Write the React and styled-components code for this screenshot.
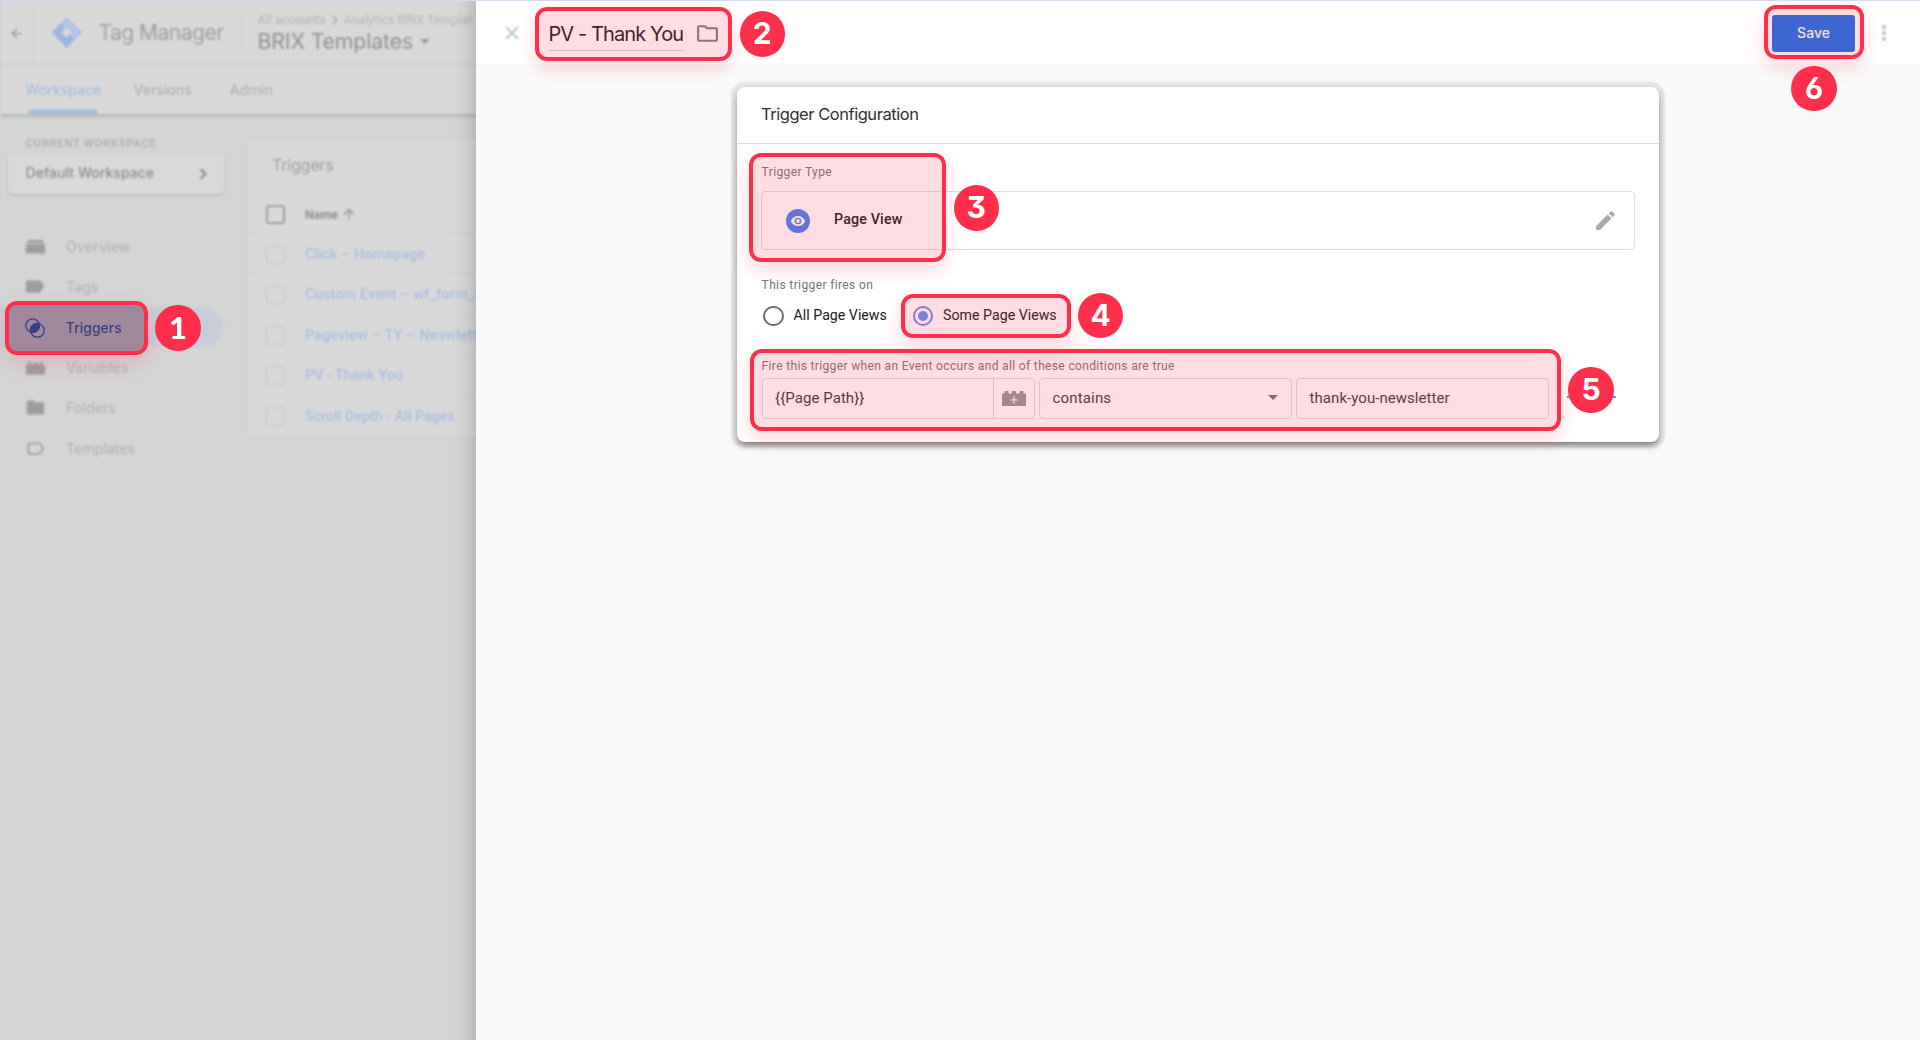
import React from "react";
import styled, { createGlobalStyle, css } from "styled-components";

const RED = "#ff2e4b";
const SANS = `Inter, "Open Sans", sans-serif`;
const ROBOTO = `Roboto, "Liberation Sans", sans-serif`;

const Global = createGlobalStyle`
  *, *::before, *::after { box-sizing: border-box; }
  body { margin: 0; background: #f8faf9; overflow: hidden; }
`;

const Page = styled.div`
  position: relative;
  display: flex;
  width: 1920px;
  height: 1040px;
  overflow: hidden;
  font-family: ${ROBOTO};
  color: #3c4043;
  &::before {
    content: "";
    position: absolute;
    z-index: 3;
    inset: 0 0 auto 0;
    height: 1px;
    background: #d5daf2;
  }
`;

const Text = styled.span`
  font-family: ${(p) => (p.$sans ? SANS : ROBOTO)};
  font-size: ${(p) => p.$size}px;
  font-weight: ${(p) => p.$weight || 400};
  letter-spacing: ${(p) => p.$track || 0}px;
  color: ${(p) => p.$color || "inherit"};
  line-height: 1.2;
  white-space: nowrap;
`;

/* ---------- left (dimmed) pane ---------- */

const Backdrop = styled.aside`
  position: relative;
  flex: none;
  width: 476px;
  height: 1040px;
  overflow: hidden;
  background: #d3d5d4;
  border-left: 1px solid #cdd1dc;
  &::after {
    content: "";
    position: absolute;
    inset: 0 0 0 auto;
    width: 22px;
    background: linear-gradient(90deg, rgba(0, 0, 0, 0), rgba(0, 0, 0, 0.04) 50%, rgba(0, 0, 0, 0.13));
  }
`;

const Soft = styled.div`
  filter: blur(1.25px);
  width: 520px;
  margin-left: -1px;
`;

const TopBar = styled.header`
  display: flex;
  align-items: center;
  height: 65px;
  background: #d8d8d8;
  border-bottom: 1px solid #d0d1d1;
`;

const BackCell = styled.div`
  display: flex;
  align-items: center;
  justify-content: center;
  width: 34px;
  height: 64px;
  padding-top: 3px;
  border-right: 1px solid #cfd0d0;
`;

const Brand = styled.div`
  display: flex;
  align-items: center;
  gap: 17px;
  width: 208px;
  height: 32px;
  padding: 2px 0 0 16.5px;
  border-right: 1px solid #cfd0d0;
`;

const Account = styled.div`
  display: flex;
  flex-direction: column;
  padding: 1.5px 0 0 15.5px;
`;

const Line = styled.div`
  display: flex;
  align-items: center;
  gap: ${(p) => p.$gap}px;
`;

const Tabs = styled.nav`
  display: flex;
  gap: 33px;
  height: 50px;
  padding-left: 25.5px;
  background: #d8d8d8;
  border-bottom: 1px solid #b9bbbb;
  box-shadow: 0 1px 3px rgba(0, 0, 0, 0.22);
`;

const Tab = styled.div`
  position: relative;
  width: ${(p) => p.$width}px;
  padding-top: 15px;
  color: ${(p) => (p.$active ? "#a5bbe3" : "#adafb0")};
  ${(p) => p.$active && css`
    &::after {
      content: "";
      position: absolute;
      left: 2px;
      right: 3px;
      bottom: 0;
      height: 5px;
      border-radius: 4px 4px 0 0;
      background: #a9bce2;
    }
  `}
`;

const Workarea = styled.div`
  display: flex;
  align-items: flex-start;
`;

const SideNav = styled.div`
  display: flex;
  flex-direction: column;
  width: 247px;
  padding-top: 20.5px;
`;

const Caption = styled.div`
  height: 18px;
  padding-left: 25.5px;
  line-height: 12px;
`;

const WorkspacePicker = styled.div`
  display: flex;
  align-items: center;
  justify-content: space-between;
  width: 216px;
  height: 40.5px;
  margin: 0 0 32px 8px;
  padding: 0 10px 0 17.5px;
  border-radius: 4px;
  background: #d9d9d9;
  box-shadow: 0 1px 3px rgba(0, 0, 0, 0.16);
`;

const NavItem = styled.div`
  display: flex;
  align-items: center;
  gap: 20px;
  width: 223px;
  height: 40.4px;
  padding-left: 25px;
  border-radius: 0 20px 20px 0;
  background: ${(p) => (p.$active ? "#c9cdd9" : "transparent")};
  color: #adafaf;
`;

const TableCard = styled.section`
  width: 273px;
  height: 300px;
  margin-top: 23px;
  background: #d8d8d8;
  border: 1px solid #cfd1d1;
  border-radius: 8px;
`;

const CardTitle = styled.div`
  height: 55.5px;
  padding: 17px 0 0 24px;
`;

const TableRow = styled.div`
  display: flex;
  align-items: center;
  gap: 20px;
  height: 40.4px;
  padding-left: 18px;
  border-bottom: ${(p) => (p.$last ? 0 : 1)}px solid #cccece;
`;

const Check = styled.span`
  flex: none;
  width: 19px;
  height: 19px;
  border: ${(p) => (p.$strong ? "2px solid #9c9e9f" : "1.5px solid #c3c5c5")};
  border-radius: 3px;
`;

/* ---------- editor pane ---------- */

const Editor = styled.main`
  display: flex;
  flex-direction: column;
  flex: 1;
  background: #f8faf9;
`;

const EditorBar = styled.header`
  display: flex;
  align-items: center;
  height: 64px;
  padding: 2px 24.5px 0 25px;
  background: #fff;
`;

const Title = styled.div`
  width: 135px;
  height: 34px;
  margin: 2px 11.5px 0 25.5px;
  padding-top: 4.5px;
  border-bottom: 1px solid #d4d6d9;
`;

const Save = styled.button`
  width: 83px;
  height: 37px;
  margin: 0 16.5px 0 auto;
  padding: 0;
  border: 0;
  border-radius: 3px;
  background: #1a72ea;
  color: #fff;
`;

const Card = styled.section`
  width: 921.5px;
  height: 355px;
  margin: 23px 0 0 261px;
  border-radius: 8px;
  background: #fff;
  box-shadow: 0 4px 7px -1px rgba(0, 0, 0, 0.5), 0 0.5px 2px 5.5px rgba(60, 64, 67, 0.1);
`;

const CardHead = styled.div`
  display: flex;
  align-items: center;
  height: 57px;
  padding: 0 0 0 24px;
  border-bottom: 1px solid #d9dadf;
`;

const CardBody = styled.div`
  display: flex;
  flex-direction: column;
  padding: 20px 24px 0 24.6px;
`;

const Label = styled.div`
  height: ${(p) => p.$height}px;
  padding-top: ${(p) => p.$top}px;
  line-height: 14px;
  color: #757779;
`;

const TypeBox = styled.div`
  display: flex;
  align-items: center;
  height: 59px;
  margin: 0 0 0 -1px;
  padding: 0 16px 0 24px;
  border: 1px solid #dcdee0;
  border-radius: 4px;
`;

const TypeName = styled.div`
  flex: 1;
  padding: 0 0 3px 24.5px;
`;

const Radios = styled.div`
  display: flex;
  height: 41px;
  padding-left: 1.5px;
  color: #202124;
`;

const RadioItem = styled.label`
  display: flex;
  align-items: center;
  gap: 10px;
  width: ${(p) => p.$width}px;
`;

const RadioDot = styled.span`
  display: grid;
  place-items: center;
  width: 20.5px;
  height: 20.5px;
  border: 2px solid ${(p) => (p.$on ? "#5f93f3" : "#6b6d70")};
  border-radius: 50%;
  &::after {
    content: "";
    width: 10.5px;
    height: 10.5px;
    border-radius: 50%;
    background: ${(p) => (p.$on ? "#5f93f3" : "transparent")};
  }
`;

const Condition = styled.div`
  display: flex;
  align-items: center;
  gap: 4.5px;
`;

const Field = styled.div`
  display: flex;
  align-items: center;
  width: ${(p) => p.$width}px;
  height: 41px;
  padding: 0 0 1px 12.5px;
  border: 1px solid #dcdee0;
  border-radius: 4px;
`;

const FieldValue = styled.div`
  flex: 1;
`;

const FieldAddon = styled.div`
  display: flex;
  align-items: center;
  justify-content: center;
  width: 41px;
  height: 39px;
  margin-bottom: -1px;
  border-left: 1px solid #d4d6d8;
`;

const Caret = styled.span`
  width: 0;
  height: 0;
  margin-right: ${(p) => p.$right || 0}px;
  border: 5px solid transparent;
  border-bottom: 0;
  border-top-color: ${(p) => p.$color};
`;

const RowActions = styled.div`
  display: flex;
  gap: 24.5px;
  padding: 0 0 2px 13.5px;
`;

/* ---------- numbered callouts lying over the page ---------- */

const Frame = styled.div`
  position: absolute;
  z-index: 4;
  left: ${(p) => p.$x}px;
  top: ${(p) => p.$y}px;
  width: ${(p) => p.$w}px;
  height: ${(p) => p.$h}px;
  border: 4.5px solid ${RED};
  border-radius: 12px;
  background: ${(p) => p.$fill || "rgba(255, 46, 75, 0.16)"};
  box-shadow: 0 8px 20px rgba(255, 46, 75, 0.2);
`;

const FocusedItem = styled(Frame)`
  display: flex;
  align-items: center;
  gap: 20.5px;
  padding-left: 16px;
`;

const Badge = styled.div`
  position: absolute;
  z-index: 5;
  left: ${(p) => p.$cx - 22.65}px;
  top: ${(p) => p.$cy - 22.65}px;
  width: 45.3px;
  height: 45.3px;
  border-radius: 50%;
  background: ${RED};
  color: #fff;
  font: ${(p) => (p.$serifed ? `900 31px/44px Lato, sans-serif` : `700 30px/45px ${SANS}`)};
  font-feature-settings: "cv09", "cv03", "lnum";
  text-align: center;
`;

/* ---------- icons ---------- */

const Glyph = styled.svg`
  flex: none;
  filter: ${(p) => (p.$blur ? "blur(1px)" : "none")};
`;

const Icon = ({ d, size = 24, color = "currentColor", blur }) => (
  <Glyph width={size} height={size} viewBox="0 0 24 24" fill={color} $blur={blur}>
    <path d={d} />
  </Glyph>
);

const P = {
  back: "M20 11H7.83l5.59-5.59L12 4l-8 8 8 8 1.41-1.41L7.83 13H20v-2z",
  up: "M4 12l1.41 1.41L11 7.83V20h2V7.83l5.58 5.59L20 12l-8-8-8 8z",
  chev: "M10 6L8.59 7.41 13.17 12l-4.58 4.59L10 18l6-6z",
  close: "M19 6.41L17.59 5 12 10.59 6.41 5 5 6.41 10.59 12 5 17.59 6.41 19 12 13.41 17.59 19 19 17.59 13.41 12z",
  folder: "M10 4H4c-1.1 0-2 .9-2 2v12c0 1.1.9 2 2 2h16c1.1 0 2-.9 2-2V8c0-1.1-.9-2-2-2h-8l-2-2z",
  folderLine: "M9.17 6l2 2H20v10H4V6h5.17M10 4H4c-1.1 0-2 .9-2 2v12c0 1.1.9 2 2 2h16c1.1 0 2-.9 2-2V8c0-1.1-.9-2-2-2h-8l-2-2z",
  more: "M12 8c1.1 0 2-.9 2-2s-.9-2-2-2-2 .9-2 2 .9 2 2 2zm0 2c-1.1 0-2 .9-2 2s.9 2 2 2 2-.9 2-2-.9-2-2-2zm0 6c-1.1 0-2 .9-2 2s.9 2 2 2 2-.9 2-2-.9-2-2-2z",
  edit: "M3 17.25V21h3.75L17.81 9.94l-3.75-3.75L3 17.25zM20.71 7.04a1 1 0 0 0 0-1.41l-2.34-2.34a1 1 0 0 0-1.41 0l-1.83 1.83 3.75 3.75 1.83-1.83z",
  tag: "M17.63 5.84C17.27 5.33 16.67 5 16 5H3c-1.1 0-2 .9-2 2v10c0 1.1.9 2 2 2h13c.67 0 1.27-.33 1.63-.84L22 12l-4.37-6.16z",
  tagLine: "M17.63 5.84C17.27 5.33 16.67 5 16 5H5c-1.1 0-2 .9-2 2v10c0 1.1.9 2 2 2h11c.67 0 1.27-.33 1.63-.84L22 12l-4.37-6.16zM16 17H5V7h11l3.55 5L16 17z",
  overview: "M1 9h22v11H1zM2 8L4 4.500h16L22 8z",
  bricks: "M1 9h2.500V6h4v3h2.500V6h4v3h2.500V6h4v3H23v11H1z",
};

const Logo = () => (
  <svg width="31" height="32" viewBox="0 0 31 32">
    <path d="M15.500 2L29.500 15.500 15.500 29.500 2 15.500z" fill="#9db6e4" strokeLinejoin="round" stroke="#9db6e4" strokeWidth="2" />
    <path d="M16 2L29.500 15.500 23 22 10 8z" fill="#b2c4e6" />
    <path d="M15.500 10.500l5.300 5-5.300 5.300-5.200-5.300z" fill="#d8d8d8" />
  </svg>
);

const TriggerIcon = () => (
  <svg width="20" height="20" viewBox="0 0 20 20" fill="none" stroke="#3a3f83" strokeWidth="1.3">
    <circle cx="7.6" cy="7.6" r="6.8" />
    <circle cx="12.4" cy="12.4" r="6.8" />
    <path d="M5.7 14.1A6.8 6.8 0 0 1 14.1 5.7A6.8 6.8 0 0 1 5.7 14.1z" fill="#3a3f83" />
  </svg>
);

const EyeBadge = () => (
  <svg width="24" height="24" viewBox="0 0 24 24">
    <circle cx="12" cy="12" r="12" fill="#4285f4" />
    <path d="M12 6.9c-3.3 0-6 2-7.2 5.1 1.2 3.1 3.9 5.1 7.2 5.1s6-2 7.2-5.1c-1.2-3.1-3.9-5.1-7.2-5.1z" fill="#fff" />
    <circle cx="12" cy="12" r="3.3" fill="#4285f4" />
    <circle cx="12" cy="12" r="1.9" fill="#fff" />
  </svg>
);

const BrickPlus = () => (
  <svg width="24" height="15" viewBox="0 0 24 15">
    <path d="M0 2.500h2.500V0h4v2.500h3.300V0h4.400v2.500h3.300V0h4v2.500H24V15H0z" fill="#96989b" />
    <path d="M12 5.500v7M8.500 9h7" stroke="#fff" strokeWidth="1.200" />
  </svg>
);

const NAV = [
  ["Overview", P.overview, 0.15],
  ["Tags", P.tag, -0.1],
  ["", null, 0],
  ["Variables", P.bricks, 0.05],
  ["Folders", P.folder, 0.05],
  ["Templates", P.tagLine, 0],
];

const TRIGGERS = [
  ["Click – Homepage", 0.15],
  ["Custom Event – wf_form_s", 0.24],
  ["Pageview – TY – Neswlett", 0.2],
  ["PV - Thank You", 0.02],
  ["Scroll Depth - All Pages", 0],
];

const FRAMES = [
  [535, 7, 197, 53.7],
  [749, 153.3, 197.2, 109.2],
  [900.7, 294, 170, 43.7],
  [749.7, 349, 811.3, 81.7],
  [1764.3, 5, 99.5, 54],
];

const BADGES = [
  [1, 178, 328],
  [2, 762.3, 34],
  [3, 976.3, 208],
  [4, 1100.7, 315.7],
  [5, 1591, 390],
  [6, 1814, 88.7],
];

export default function App() {
  return (
    <Page>
      <Global />
      <Backdrop>
        <Soft>
          <TopBar>
            <BackCell><Icon d={P.back} size={15} color="#8f9192" /></BackCell>
            <Brand>
              <Logo />
              <Text $sans $size={21} $track={-0.5} $color="#a0a2a3">Tag Manager</Text>
            </Brand>
            <Account>
              <Line $gap={0}>
                <Text $size={12} $track={0.2} $color="#b2b4b4">All accounts</Text>
                <Icon d={P.chev} size={18} color="#a4a6a7" />
                <Text $size={12} $track={0.2} $color="#b2b4b4">Analytics BRIX Templat</Text>
              </Line>
              <Line $gap={7}>
                <Text $sans $size={21.3} $track={-0.15} $color="#919394">BRIX Templates</Text>
                <Caret $color="#919394" />
              </Line>
            </Account>
          </TopBar>
          <Tabs>
            <Tab $active $width={75}><Text $sans $size={14} $weight={500}>Workspace</Text></Tab>
            <Tab $width={63}><Text $sans $size={14} $weight={500}>Versions</Text></Tab>
            <Tab $width={60}><Text $sans $size={14} $weight={500} $track={0.15}>Admin</Text></Tab>
          </Tabs>
          <Workarea>
            <SideNav>
              <Caption><Text $size={11} $weight={500} $track={0.9} $color="#a9abab">CURRENT WORKSPACE</Text></Caption>
              <WorkspacePicker>
                <Text $sans $size={14} $weight={500} $track={0.05} $color="#8c8e8f">Default Workspace</Text>
                <Icon d={P.chev} size={22} color="#7e8081" />
              </WorkspacePicker>
              {NAV.map(([name, d, track], i) => (
                <NavItem key={i} $active={!d}>
                  {d && <Icon d={d} size={21} color="#9c9e9f" />}
                  <Text $sans $size={14.2} $track={track}>{name}</Text>
                </NavItem>
              ))}
            </SideNav>
            <TableCard>
              <CardTitle><Text $sans $size={16} $track={-0.2} $color="#9b9d9e">Triggers</Text></CardTitle>
              <TableRow>
                <Check $strong />
                <Line $gap={3}>
                  <Text $size={12.5} $weight={700} $color="#909293">Name</Text>
                  <Icon d={P.up} size={16} color="#909293" />
                </Line>
              </TableRow>
              {TRIGGERS.map(([name, track], i) => (
                <TableRow key={name} $last={i === TRIGGERS.length - 1}>
                  <Check />
                  <Text $size={14.3} $weight={500} $track={track} $color="#a9bde2">{name}</Text>
                </TableRow>
              ))}
            </TableCard>
          </Workarea>
        </Soft>
      </Backdrop>

      <Editor>
        <EditorBar>
          <Icon d={P.close} size={22} color="#b9bbbd" blur />
          <Title><Text $sans $size={20} $track={-0.9} $color="#202124">PV - Thank You</Text></Title>
          <Icon d={P.folderLine} size={25} color="#7c7e82" />
          <Save><Text $sans $size={14} $weight={500}>Save</Text></Save>
          <Icon d={P.more} size={24} color="#b4b6b8" blur />
        </EditorBar>
        <Card>
          <CardHead><Text $sans $size={16.5} $track={-0.46} $color="#303134">Trigger Configuration</Text></CardHead>
          <CardBody>
            <Label $height={27} $top={0}><Text $size={12} $track={0.38}>Trigger Type</Text></Label>
            <TypeBox>
              <EyeBadge />
              <TypeName><Text $size={14.3} $weight={500} $track={0.12} $color="#202124">Page View</Text></TypeName>
              <Icon d={P.edit} size={25} color="#a9abac" />
            </TypeBox>
            <Label $height={45.5} $top={27}><Text $size={12} $track={0.38}>This trigger fires on</Text></Label>
            <Radios>
              <RadioItem $width={149.5}><RadioDot /><Text $size={14.2}>All Page Views</Text></RadioItem>
              <RadioItem><RadioDot $on /><Text $size={14.2}>Some Page Views</Text></RadioItem>
            </Radios>
            <Label $height={41} $top={21.5}><Text $size={12} $track={0.35}>Fire this trigger when an Event occurs and all of these conditions are true</Text></Label>
            <Condition>
              <Field $width={273}>
                <FieldValue><Text $size={15} $track={0.05}>{"{{Page Path}}"}</Text></FieldValue>
                <FieldAddon><BrickPlus /></FieldAddon>
              </Field>
              <Field $width={252.5}>
                <FieldValue><Text $size={15} $track={0.15}>contains</Text></FieldValue>
                <Caret $color="#737578" $right={13} />
              </Field>
              <Field $width={253}><Text $size={15} $track={0.05}>thank-you-newsletter</Text></Field>
              <RowActions>
                <svg width="12" height="12"><path d="M0 6h12" stroke="#1a73e8" strokeWidth="1.500" /></svg>
                <svg width="12" height="12"><path d="M0 6h12M6 0v12" stroke="#1a73e8" strokeWidth="1.500" /></svg>
              </RowActions>
            </Condition>
          </CardBody>
        </Card>
      </Editor>

      <FocusedItem $x={5.3} $y={301} $w={142.7} $h={54} $fill="#a1889d">
        <TriggerIcon />
        <Text $sans $size={14} $weight={500} $color="#3a3f83">Triggers</Text>
      </FocusedItem>
      {FRAMES.map(([x, y, w, h]) => (
        <Frame key={x} $x={x} $y={y} $w={w} $h={h} />
      ))}
      {BADGES.map(([n, x, y]) => (
        <Badge key={n} $cx={x} $cy={y} $serifed={n === 1}>{n}</Badge>
      ))}
    </Page>
  );
}
